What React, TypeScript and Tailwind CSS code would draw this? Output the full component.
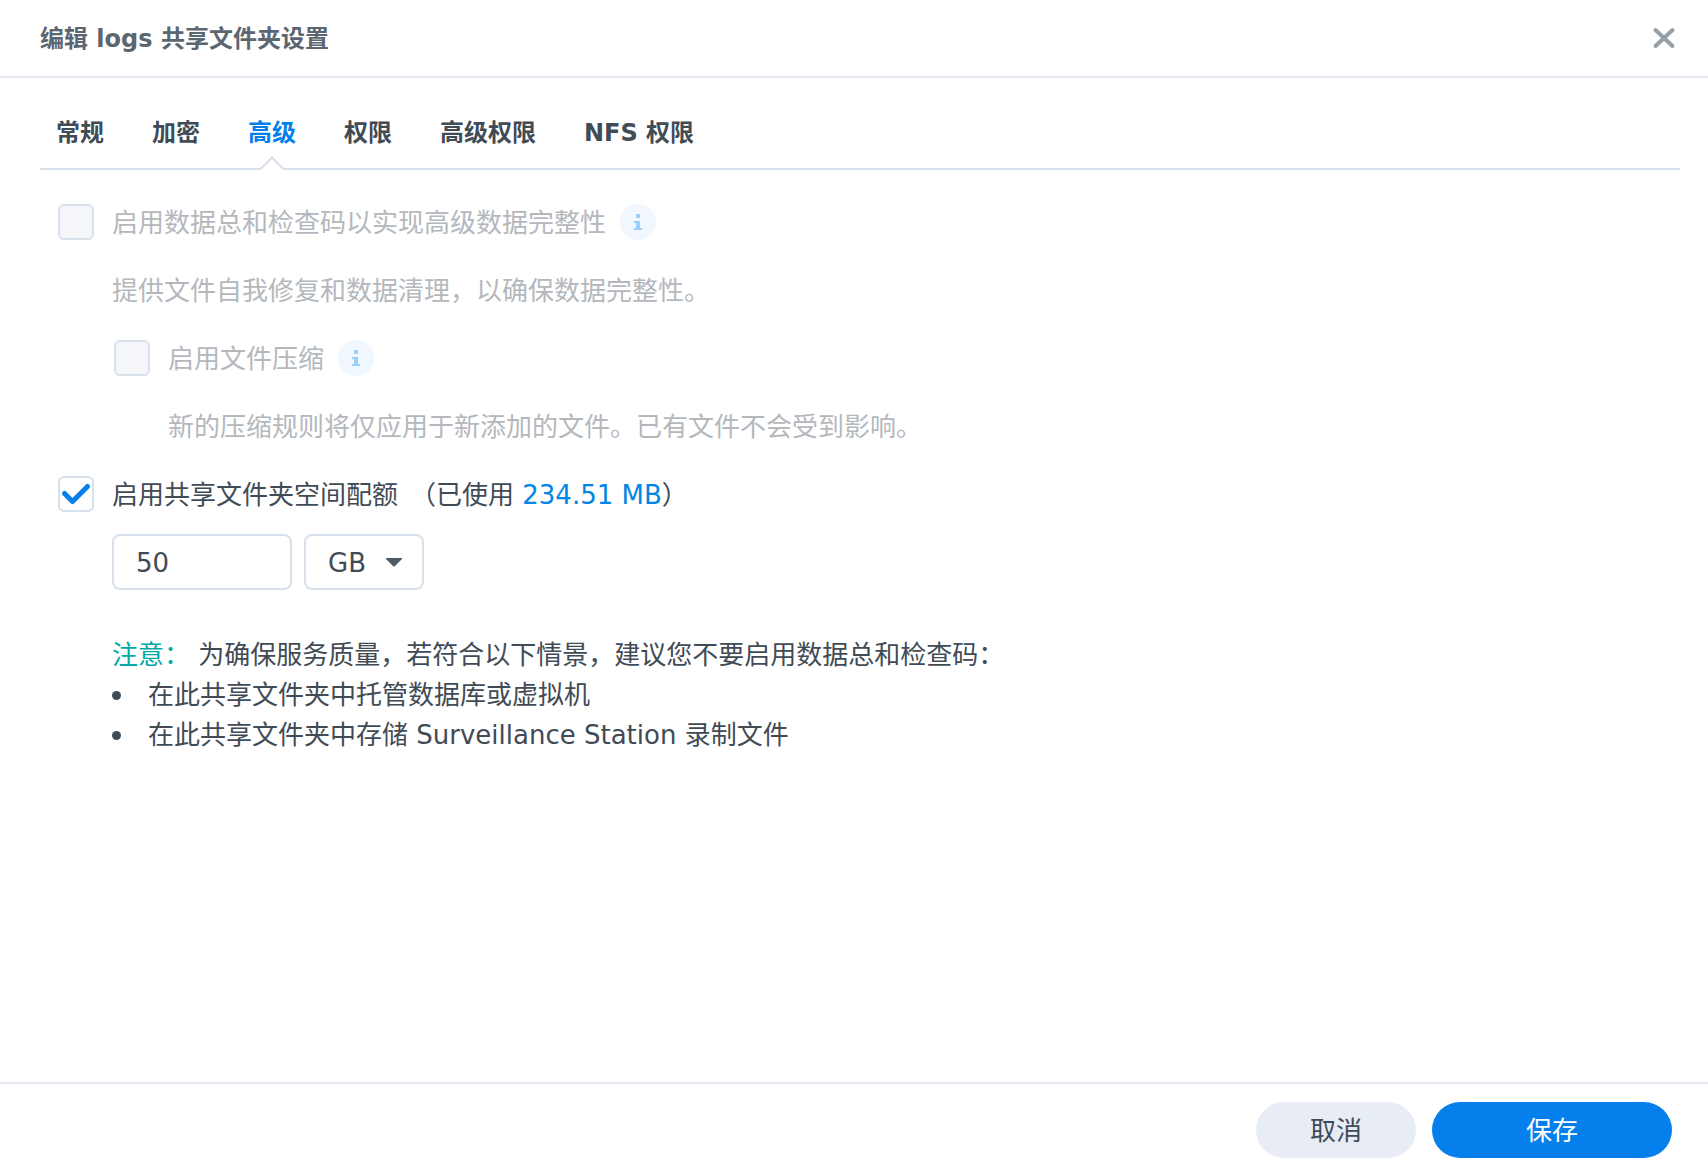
import { useState } from 'react'

const tabs = ['常规', '加密', '高级', '权限', '高级权限', 'NFS 权限']

function CloseIcon() {
  return (
    <svg width="24" height="24" viewBox="0 0 24 24" fill="none" stroke="#979ea6" strokeWidth="4" strokeLinecap="round">
      <path d="M3.500 4 20.500 20M20.500 4 3.500 20" />
    </svg>
  )
}

function TabCaret() {
  return (
    <svg className="absolute -bottom-0.5 left-1/2 -translate-x-1/2" width="28" height="14" viewBox="0 0 28 14">
      <path d="M2 14 14 1.5 26 14Z" fill="#fff" />
      <path d="M1 13H2.5L14 1.5 25.5 13H27" fill="none" stroke="#d7e1eb" strokeWidth="2" />
    </svg>
  )
}

function InfoButton({ label }: { label: string }) {
  return (
    <button type="button" aria-label={label} className="size-9 rounded-full bg-[#f0f7ff]">
      <svg width="36" height="36" viewBox="0 0 36 36" fill="#9bcef9">
        <path d="M16 10h4v4h-4zM14 17h6v7h2v2h-8v-2h2v-5h-2z" />
      </svg>
    </button>
  )
}

type CheckboxProps = {
  id: string
  defaultChecked?: boolean
  disabled?: boolean
}

function Checkbox({ id, defaultChecked, disabled }: CheckboxProps) {
  return (
    <span className="mr-1 grid size-9 shrink-0">
      <input
        id={id}
        type="checkbox"
        defaultChecked={defaultChecked}
        disabled={disabled}
        className="peer col-start-1 row-start-1 size-9 appearance-none rounded-md border-2 border-[#d7e1eb] bg-white disabled:bg-[#f5f7fb]"
      />
      <svg
        className="pointer-events-none invisible col-start-1 row-start-1 peer-checked:visible"
        width="36"
        height="36"
        viewBox="0 0 36 36"
        fill="none"
        stroke="#057feb"
        strokeWidth="5"
        strokeLinecap="round"
        strokeLinejoin="round"
      >
        <path d="M6.5 17.5 14.5 25.5 29.5 10.5" />
      </svg>
    </span>
  )
}

export default function App() {
  const [active, setActive] = useState('高级')
  const [quota, setQuota] = useState('50')

  return (
    <div className="flex min-h-screen flex-col bg-white font-['DejaVu_Sans','Noto_Sans_CJK_SC',sans-serif] text-[26px] leading-10 text-[#414b55]">
      <header className="flex h-[78px] shrink-0 items-center justify-between border-b-2 border-[#e1e8ef] pr-8 pl-10">
        <h1 className="pt-0.5 text-2xl font-bold text-[#5c6670]">编辑 logs 共享文件夹设置</h1>
        <button type="button" aria-label="关闭">
          <CloseIcon />
        </button>
      </header>

      <nav className="mr-7 ml-10 flex gap-12 border-b-2 border-[#d7e1eb] pt-5 pl-4">
        {tabs.map((tab) => (
          <button
            key={tab}
            type="button"
            onClick={() => setActive(tab)}
            className={`relative h-[70px] text-2xl font-bold ${tab === active ? 'text-[#057feb]' : ''}`}
          >
            {tab}
            {tab === active && <TabCaret />}
          </button>
        ))}
      </nav>

      <main className="grow px-[58px] pt-[18px]">
        <div className="flex h-[68px] items-center gap-[14px] text-[#b4b8bd]">
          <Checkbox id="checksum" disabled />
          <label htmlFor="checksum" className="pt-0.5">启用数据总和检查码以实现高级数据完整性</label>
          <InfoButton label="数据总和检查码说明" />
        </div>
        <p className="flex h-[68px] items-center pt-0.5 pl-[54px] text-[#b4b8bd]">
          提供文件自我修复和数据清理，以确保数据完整性。
        </p>
        <div className="flex h-[68px] items-center gap-[14px] pl-14 text-[#b4b8bd]">
          <Checkbox id="compress" disabled />
          <label htmlFor="compress" className="pt-0.5">启用文件压缩</label>
          <InfoButton label="文件压缩说明" />
        </div>
        <p className="flex h-[68px] items-center pt-0.5 pl-[110px] text-[#b4b8bd]">
          新的压缩规则将仅应用于新添加的文件。已有文件不会受到影响。
        </p>
        <div className="flex h-[68px] items-center gap-[14px]">
          <Checkbox id="quota" defaultChecked />
          <div className="flex gap-3 pt-0.5">
            <label htmlFor="quota">启用共享文件夹空间配额</label>
            <span>
              （已使用 <span className="text-[#0086e5]">234.51 MB</span>）
            </span>
          </div>
        </div>

        <div className="pl-[54px]">
          <div className="flex h-[68px] items-center gap-3">
            <input
              type="text"
              aria-label="配额大小"
              value={quota}
              onChange={(e) => setQuota(e.target.value)}
              className="h-14 w-[180px] rounded-lg border-2 border-[#d7e1eb] px-[22px] pt-0.5"
            />
            <div className="relative">
              <select
                aria-label="配额单位"
                defaultValue="GB"
                className="h-14 w-[120px] appearance-none rounded-lg border-2 border-[#d7e1eb] bg-white pt-0.5 pl-[22px]"
              >
                <option>MB</option>
                <option>GB</option>
                <option>TB</option>
              </select>
              <svg
                className="pointer-events-none absolute top-6 right-[22px]"
                width="16"
                height="9"
                viewBox="0 0 16 9"
                fill="#505a64"
              >
                <path d="M0 0H16V1L8.500 8.500H7.500L0 1Z" />
              </svg>
            </div>
          </div>

          <p className="mt-[39px]">
            <span className="text-[#00aaa5]">注意：</span> 为确保服务质量，若符合以下情景，建议您不要启用数据总和检查码：
          </p>
          <ul>
            {['在此共享文件夹中托管数据库或虚拟机', '在此共享文件夹中存储 Surveillance Station 录制文件'].map((item) => (
              <li key={item} className="flex items-center gap-[27px] before:size-[9px] before:rounded-full before:bg-[#414b55]">
                {item}
              </li>
            ))}
          </ul>
        </div>
      </main>

      <footer className="flex shrink-0 justify-end gap-4 border-t-2 border-[#e1e8ef] pt-[18px] pr-9 pb-[14px]">
        <button type="button" className="h-14 w-40 rounded-full bg-[#e8edf5] pt-0.5">
          取消
        </button>
        <button type="button" className="h-14 w-60 rounded-full bg-[#057feb] pt-0.5 text-white">
          保存
        </button>
      </footer>
    </div>
  )
}
